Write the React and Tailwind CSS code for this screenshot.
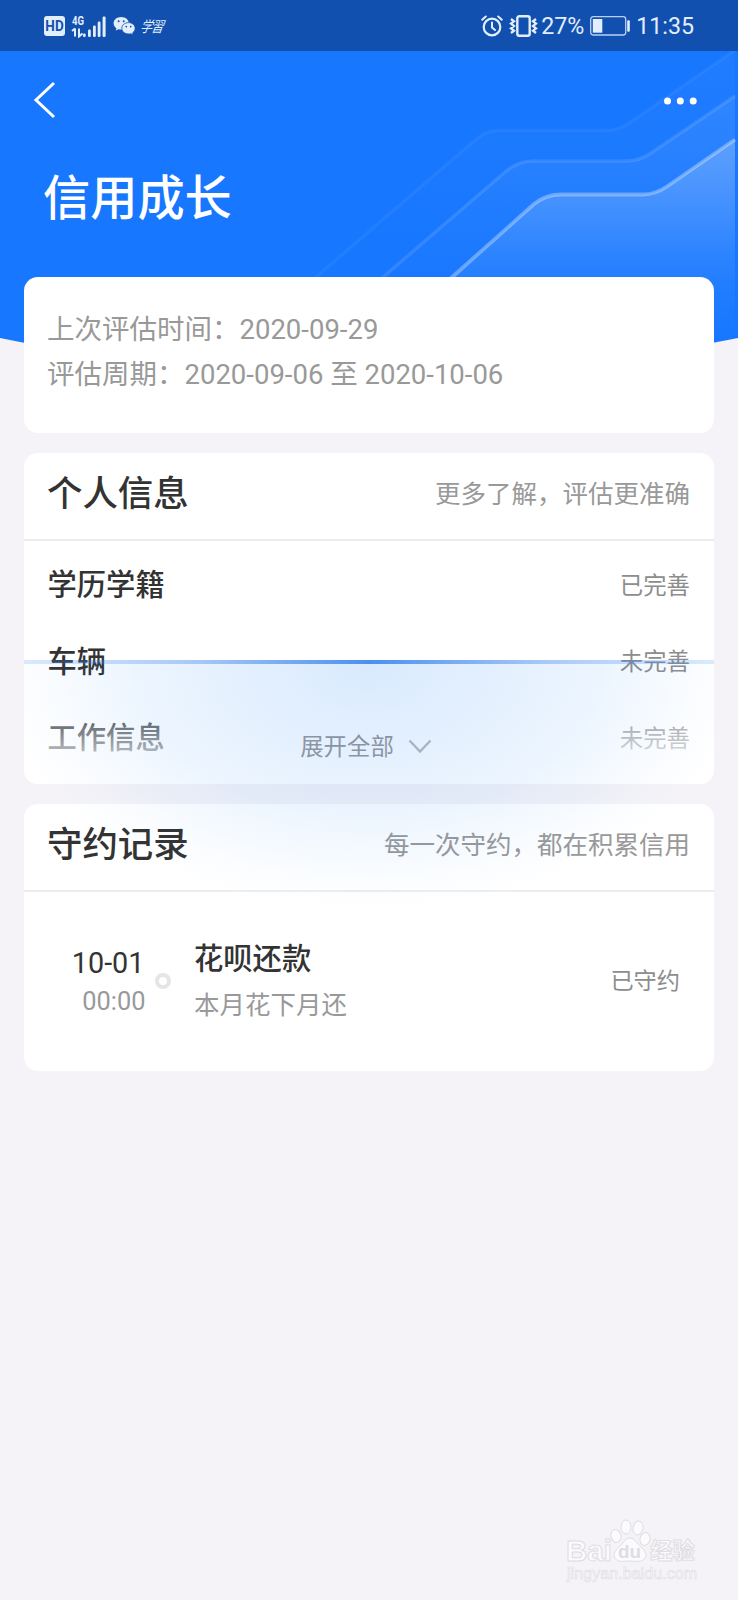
import { clsx } from "clsx";

const PROFILE_ITEMS = [
  { id: "education", label: "学历学籍", status: "已完善" },
  { id: "vehicle", label: "车辆", status: "未完善" },
  { id: "job", label: "工作信息", status: "未完善" },
];

const RECORDS = [
  { id: 1, date: "10-01", time: "00:00", title: "花呗还款", note: "本月花下月还", status: "已守约" },
];

function SignalIcons() {
  return (
    <div className="flex items-center">
      <span className="flex h-[20px] w-[21px] items-center justify-center rounded-[3px] bg-[#e3eefc] text-[#1250b0]">
        <span className="inline-block scale-y-115 text-[13.5px] font-bold leading-none">HD</span>
      </span>
      <svg className="ml-[6px] h-[24px] w-[36px]" viewBox="0 0 36 24" fill="#e3eefc">
        <text x="1" y="11" fontFamily="Roboto" fontSize="13" fontWeight="700" textLength="12" lengthAdjust="spacingAndGlyphs">
          4G
        </text>
        <path d="M4 14.5v8M1 17l3-2.5M8 14.5v8l3.5-3" fill="none" stroke="#e3eefc" strokeWidth="2" />
        <rect x="12" y="19.5" width="2.6" height="3.5" rx="1" />
        <rect x="17" y="15.5" width="2.8" height="7.5" rx="1.2" />
        <rect x="22" y="11.5" width="2.8" height="11.5" rx="1.2" />
        <rect x="26.7" y="7.5" width="2.8" height="15.5" rx="1.2" />
        <rect x="31.6" y="2.5" width="3" height="20.5" rx="1.2" />
      </svg>
      <svg className="ml-[6px] h-[20px] w-[23px]" viewBox="0 0 23 20">
        <path
          d="M8.2 1C3.9 1 .6 3.8.6 7.3c0 2 1.1 3.7 2.8 4.9l-.7 2.4 2.8-1.4c.9.2 1.8.4 2.7.4 4.2 0 7.6-2.8 7.6-6.3S12.4 1 8.2 1z"
          fill="#e3eefc"
        />
        <path
          d="M15.5 6.6c-3.7 0-6.7 2.5-6.7 5.7s3 5.7 6.7 5.7c.8 0 1.6-.1 2.3-.3l2.4 1.2-.6-2.1c1.6-1 2.5-2.7 2.5-4.5 0-3.2-2.9-5.7-6.6-5.7z"
          fill="#e3eefc"
          stroke="#1250b0"
          strokeWidth="0.8"
        />
        <g fill="#1250b0">
          <circle cx="5.6" cy="5.3" r="1" />
          <circle cx="10.7" cy="5.3" r="1" />
          <circle cx="13.3" cy="10.6" r="0.9" />
          <circle cx="17.7" cy="10.6" r="0.9" />
        </g>
      </svg>
      <span className="ml-[6px] inline-block -skew-x-[20deg] font-['Noto_Sans_CJK_TC',sans-serif] text-[12px] leading-[20px] tracking-[-1px] text-[#e3eefc]">
        <span className="inline-block scale-y-125">学習</span>
      </span>
    </div>
  );
}

function StatusBar() {
  return (
    <div className="flex h-[51px] items-center justify-between bg-[#1250b0] pl-[44px] pr-[44px] text-[#e3eefc]">
      <SignalIcons />
      <div className="flex items-center">
        <svg className="h-[22px] w-[22px]" viewBox="0 0 22 22" fill="none" stroke="#e3eefc" strokeLinecap="round">
          <circle cx="11" cy="12" r="8.3" strokeWidth="2.2" />
          <path d="M11 7.5v5l3 2.5" strokeWidth="2" />
          <path d="M1.2 4.7L4.8 1.5M20.8 4.7L17.2 1.5" strokeWidth="2" />
        </svg>
        <svg className="ml-[6px] h-[22px] w-[29px]" viewBox="0 0 29 22" fill="none" stroke="#e3eefc">
          <rect x="8.3" y="1.2" width="12.4" height="19.5" rx="2" strokeWidth="2.4" />
          <path
            d="M2 4l3 2.3-3 2.3 3 2.4-3 2.4 3 2.3-3 2.3M27 4l-3 2.3 3 2.3-3 2.4 3 2.4-3 2.3 3 2.3"
            strokeWidth="2.3"
          />
        </svg>
        <span className="ml-[3px] text-[23.2px] leading-[26px]">27%</span>
        <svg className="ml-[6px] h-[20px] w-[41px]" viewBox="0 0 41 20">
          <rect x="0.7" y="0.7" width="35" height="18.3" rx="2.5" fill="none" stroke="#b9d0f2" strokeWidth="1.3" />
          <rect x="2.8" y="3" width="9.5" height="13.7" fill="#e3eefc" />
          <rect x="37.2" y="4.2" width="2.6" height="11.5" rx="1" fill="#e3eefc" />
        </svg>
        <span className="ml-[5px] text-[23.2px] leading-[26px]">11:35</span>
      </div>
    </div>
  );
}

// Blue header shape with the three rising lines
function HeaderBackdrop() {
  return (
    <svg className="absolute left-0 top-[51px] h-[330px] w-[738px]" viewBox="0 51 738 330" fill="none">
      <defs>
        <linearGradient id="rise1" x1="0" y1="139" x2="0" y2="340" gradientUnits="userSpaceOnUse">
          <stop offset="0" stopColor="#fff" stopOpacity="0.24" />
          <stop offset="0.65" stopColor="#fff" stopOpacity="0.06" />
          <stop offset="1" stopColor="#fff" stopOpacity="0" />
        </linearGradient>
        <linearGradient id="rise2" x1="0" y1="96" x2="0" y2="300" gradientUnits="userSpaceOnUse">
          <stop offset="0" stopColor="#fff" stopOpacity="0.08" />
          <stop offset="1" stopColor="#fff" stopOpacity="0" />
        </linearGradient>
        <linearGradient id="rise3" x1="0" y1="51" x2="0" y2="250" gradientUnits="userSpaceOnUse">
          <stop offset="0" stopColor="#fff" stopOpacity="0.04" />
          <stop offset="1" stopColor="#fff" stopOpacity="0" />
        </linearGradient>
      </defs>
      <path d="M0 51H738V338Q369 415 0 338Z" fill="#1777ff" />
      <path d="M315 278L475 140Q486 130.5 498 130.5H606Q618 130.5 630 122.5L735 50V278Z" fill="url(#rise3)" />
      <path
        d="M315 278L475 140Q486 130.5 498 130.5H606Q618 130.5 630 122.5L735 50"
        stroke="#fff"
        strokeOpacity="0.05"
        strokeWidth="3.5"
      />
      <path d="M382 278L505 172Q518 161 533 161H627Q639 161 651 153L735 96V278Z" fill="url(#rise2)" />
      <path
        d="M382 278L505 172Q518 161 533 161H627Q639 161 651 153L735 96"
        stroke="#fff"
        strokeOpacity="0.11"
        strokeWidth="3.5"
      />
      <path d="M450 279L534 204Q546 194.5 561 194.5H643Q655 194.5 667 186.500L735 139.500V340H450Z" fill="url(#rise1)" />
      <path
        d="M450 279L534 204Q546 194.5 561 194.5H643Q655 194.5 667 186.5L735 139.5"
        stroke="#fff"
        strokeOpacity="0.32"
        strokeWidth="3.8"
      />
    </svg>
  );
}

function SectionHeader({ title, hint }) {
  return (
    <div className="flex h-[88px] items-start justify-between border-b-2 border-[#ededf0] pl-[23px] pr-[24px]">
      <h2 className="pt-[21px] text-[35.4px] font-medium leading-[40px] text-[#333]">{title}</h2>
      <span className="pt-[21px] text-[25.5px] leading-[40px] text-[#999]">{hint}</span>
    </div>
  );
}

// Light sweep that lies over the two lower cards
function ScanGlow() {
  return (
    <div className="pointer-events-none absolute left-[24px] top-[660px] h-[245px] w-[690px]">
      <div className="h-[4px] bg-[linear-gradient(90deg,rgba(60,134,238,0.18),rgba(60,134,238,0.45)_25%,rgba(60,134,238,0.92)_50%,rgba(60,134,238,0.45)_75%,rgba(60,134,238,0.18))]" />
      <div className="h-[241px] bg-[radial-gradient(375px_245px_at_50%_0,rgba(15,125,245,0.16),rgba(15,120,250,0.11)_35%,rgba(15,130,250,0.08)_62%,rgba(30,130,252,0.025)_86%,rgba(60,130,250,0)_100%)]" />
    </div>
  );
}

function Watermark() {
  return (
    <svg
      className="absolute bottom-[12px] right-[38px] h-[70px] w-[136px]"
      viewBox="0 0 136 70"
      fill="#fbfafc"
      stroke="#dedde1"
      strokeWidth="1"
    >
      <text x="2" y="43" fontFamily="Liberation Sans" fontWeight="700" fontSize="29" textLength="46" lengthAdjust="spacingAndGlyphs">
        Bai
      </text>
      <ellipse cx="52" cy="18" rx="5" ry="6.5" transform="rotate(-15 52 18)" />
      <ellipse cx="62" cy="9" rx="5" ry="7" />
      <ellipse cx="74" cy="10" rx="5" ry="7" transform="rotate(12 74 10)" />
      <ellipse cx="81" cy="21" rx="5" ry="6.5" transform="rotate(15 81 21)" />
      <path d="M66 20c-5 0-7 6-11 9-5 4-6 8-4 11 3 5 9 3 15 3s12 2 15-3c2-3 1-7-4-11-4-3-6-9-11-9z" />
      <text
        x="54"
        y="40"
        fill="#dedde1"
        stroke="none"
        fontFamily="Liberation Sans"
        fontWeight="700"
        fontSize="18"
        textLength="23"
        lengthAdjust="spacingAndGlyphs"
      >
        du
      </text>
      <text x="86" y="41" fontFamily="Noto Sans CJK SC" fontWeight="700" fontSize="22.5" textLength="45">
        经验
      </text>
      <text x="3" y="61" fontFamily="Liberation Sans" fontSize="16" strokeWidth="0.6" textLength="130">
        jingyan.baidu.com
      </text>
    </svg>
  );
}

export default function App() {
  return (
    <div className="relative h-[1600px] w-[738px] overflow-hidden bg-[#f5f3f7] font-['Roboto','Noto_Sans_CJK_SC',sans-serif]">
      <HeaderBackdrop />
      <StatusBar />

      <header className="relative h-[226px] text-white">
        <div className="flex h-[98px] items-center justify-between pl-[33px] pr-[41px]">
          <svg className="h-[38px] w-[24px]" viewBox="0 0 24 38" fill="none" stroke="#fff" strokeWidth="3">
            <path d="M21 2L3 19l18 17" />
          </svg>
          <svg className="mt-[2px] h-[8px] w-[34px]" viewBox="0 0 34 8" fill="#fff">
            <circle cx="4.5" cy="4" r="3.5" />
            <circle cx="17.3" cy="4" r="3.5" />
            <circle cx="30.2" cy="4" r="3.5" />
          </svg>
        </div>
        <h1 className="pl-[43px] pt-[20px] text-[47.2px] font-medium leading-[60px]">信用成长</h1>
      </header>

      <main className="relative flex flex-col gap-[20px] px-[24px]">
        <section className="h-[156px] rounded-[14px] bg-white px-[23px] pt-[30px] text-[27.5px] leading-[45.3px] text-[#999]">
          <p>上次评估时间：2020-09-29</p>
          <p>评估周期：2020-09-06 至 2020-10-06</p>
        </section>

        <section className="relative h-[331px] overflow-hidden rounded-[14px] bg-white">
          <SectionHeader title="个人信息" hint="更多了解，评估更准确" />
          <ul className="pt-[7px]">
            {PROFILE_ITEMS.map((item) => (
              <li key={item.id} className="flex h-[76.5px] items-center justify-between pl-[23.5px] pr-[24px]">
                <span className="text-[29.3px] font-medium text-[#333]">{item.label}</span>
                <span className="text-[23.4px] text-[#8d8d8d]">{item.status}</span>
              </li>
            ))}
          </ul>
          <div className="absolute inset-x-0 bottom-0 flex h-[81px] justify-center bg-linear-to-b from-white/0 to-white to-[75px]">
            <button type="button" className="flex h-[90px] items-center gap-[14px] pr-[6px] text-[23.4px] text-[#999]">
              展开全部
              <svg className="-mt-[3px] h-[15px] w-[24px]" viewBox="0 0 24 15" fill="none" stroke="#bbb" strokeWidth="2.4">
                <path d="M1.5 1.5l10.5 11 10.5-11" />
              </svg>
            </button>
          </div>
        </section>

        <section className="h-[267px] rounded-[14px] bg-white">
          <SectionHeader title="守约记录" hint="每一次守约，都在积累信用" />
          {RECORDS.map((record) => (
            <div key={record.id} className="flex h-[179px] items-center pr-[34px]">
              <div className="w-[121.5px] text-right">
                <p className="pr-[1px] text-[28.8px] leading-[38px] text-[#333]">{record.date}</p>
                <p className="text-[25.4px] leading-[38px] text-[#999]">{record.time}</p>
              </div>
              <span className="mb-[1px] ml-[9px] h-[16px] w-[16px] rounded-full border-4 border-[#e5e4e7]" />
              <div className="ml-[23.5px] flex-1">
                <p className="text-[29.3px] font-medium leading-[46px] text-[#333]">{record.title}</p>
                <p className="text-[25.5px] leading-[46px] text-[#999]">{record.note}</p>
              </div>
              <span className={clsx("text-[23.2px]", record.status === "已守约" ? "text-[#8d8d8d]" : "text-[#f5222d]")}>
                {record.status}
              </span>
            </div>
          ))}
        </section>
      </main>

      <ScanGlow />
      <Watermark />
    </div>
  );
}
